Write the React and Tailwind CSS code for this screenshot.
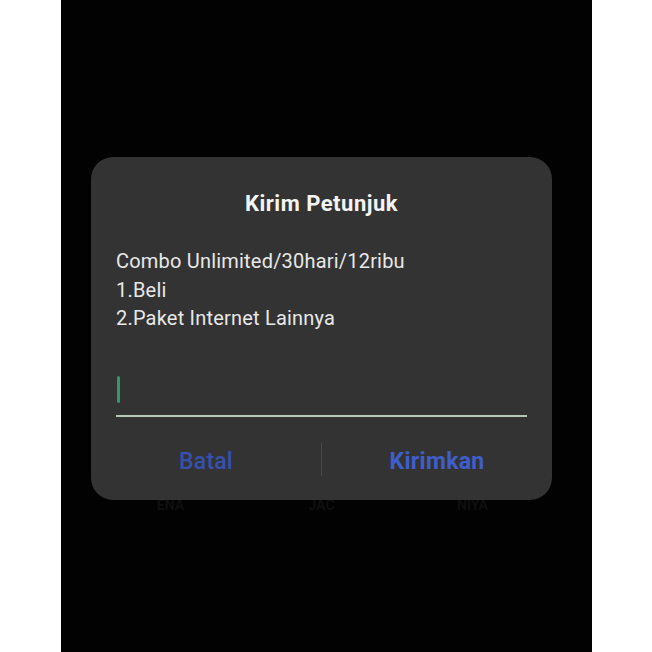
export default function App() {
  return (
    <div className="min-h-[652px] w-[652px] bg-white flex" style={{ fontFamily: "Roboto, 'Noto Sans', sans-serif" }}>
      <div className="ml-[61px] w-[531px] h-[652px] bg-[#020202] flex flex-col">
        <div className="mt-[157px] ml-[30px] w-[461px] h-[343px] rounded-[22px] bg-[#333333] flex flex-col relative z-10">
          <div className="pt-[33px] text-center text-[22px] leading-[28px] font-bold text-[#f4f4f4] tracking-[0.5px]">
            Kirim Petunjuk
          </div>
          <div className="mt-[29px] px-[25px] text-[20px] leading-[28.5px] text-[#e8e8e8] tracking-[0.2px]">
            <div>Combo Unlimited/30hari/12ribu</div>
            <div>1.Beli</div>
            <div>2.Paket Internet Lainnya</div>
          </div>
          <div className="mt-[43px] mx-[25px] flex flex-col">
            <div className="ml-[1px] w-[3px] h-[27px] rounded-full bg-[#2e9a67]" />
            <div className="mt-[12px] h-[2px] bg-[#b3c7b7]" />
          </div>
          <div className="mt-[25px] flex items-center">
            <div className="flex-1 text-center text-[23px] leading-[33px] font-medium text-[#3551ad] tracking-[0.2px] pt-[3px]">Batal</div>
            <div className="w-px h-[33px] bg-[#4a4a4a]" />
            <div className="flex-1 text-center text-[23px] leading-[33px] font-bold text-[#3f5ecb] tracking-[0.3px] pt-[3px]">Kirimkan</div>
          </div>
        </div>
        <div className="-mt-[5px] ml-[30px] w-[461px] flex text-[14px] font-bold text-[#0f0f0f]">
          <div className="flex-1 text-center pl-[4px]">ENA</div>
          <div className="flex-1 text-center">JAC</div>
          <div className="flex-1 text-center pr-[4px]">NIYA</div>
        </div>
      </div>
    </div>
  );
}
